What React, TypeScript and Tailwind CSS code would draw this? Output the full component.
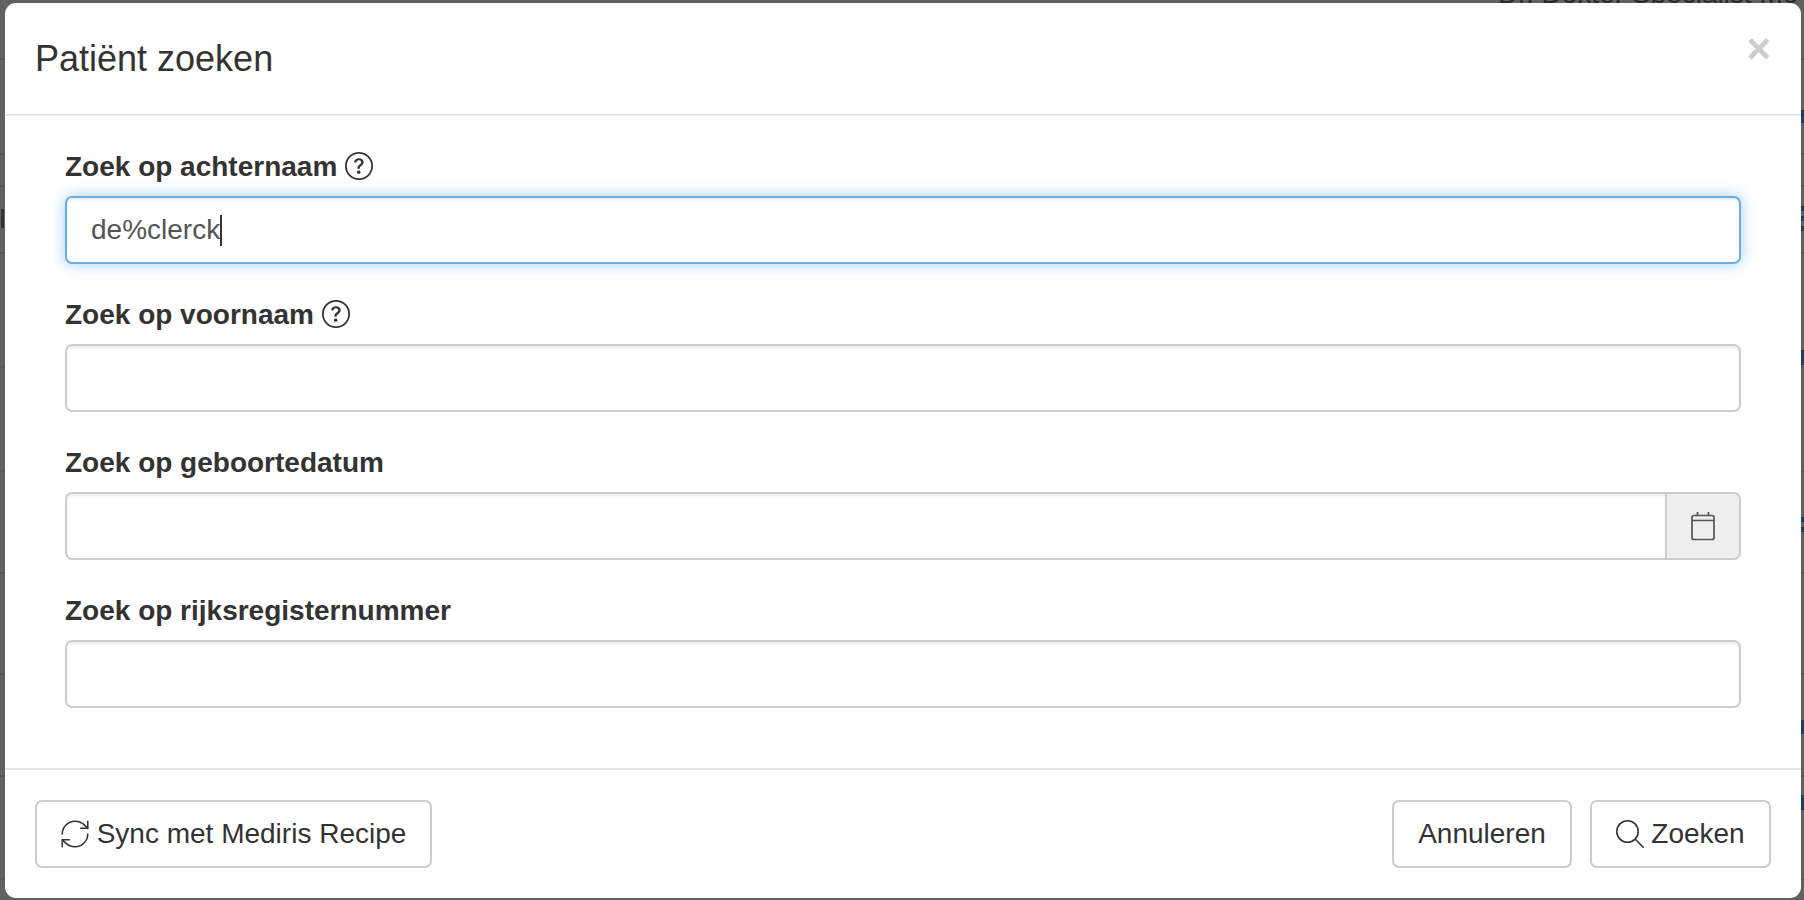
import React from 'react';
import { RefreshCw } from 'lucide-react';
import { BsQuestionCircle } from 'react-icons/bs';

const inputClass =
  'block h-[68px] w-full rounded-[7px] border-2 border-[#ccc] bg-white px-[22px] text-[28px] text-[#555] shadow-[inset_0_2px_2px_rgba(0,0,0,0.075)] outline-none';
const labelClass = 'mb-[11px] flex h-[37px] items-center gap-[8px] text-[28px] leading-[37px] font-bold text-[#333]';
const buttonClass =
  'flex h-[68px] items-center justify-center rounded-[7px] border-2 border-[#ccc] bg-white text-[28px] text-[#333]';

// rows and text of the page behind the dimmed backdrop
const rowLines = [58, 153, 185, 252, 366, 470, 572, 673, 775, 878];
const blueBits = [
  { top: 110, height: 13 },
  { top: 206, height: 5 },
  { top: 216, height: 5 },
  { top: 226, height: 5 },
  { top: 350, height: 15 },
  { top: 517, height: 5 },
  { top: 527, height: 5 },
  { top: 720, height: 14 },
  { top: 795, height: 15 },
];

const Backdrop = () => (
  <div className="absolute inset-0 overflow-hidden bg-[#616161]">
    {rowLines.map((y) => (
      <div key={y} className="absolute left-0 h-[2px] w-full bg-[#565656]" style={{ top: y }} />
    ))}
    {blueBits.map((b) => (
      <div key={b.top} className="absolute right-0 w-[3px] bg-[#1c3f5f]" style={{ top: b.top, height: b.height }} />
    ))}
    <div className="absolute top-[209px] left-[1px] h-[19px] w-[3px] bg-[#333]" />
    <div className="absolute top-[-23px] left-[1498px] text-[28px] leading-[34px] whitespace-nowrap text-[#2a2a2a]">
      Dr. Dokter Specialist Mo
    </div>
  </div>
);

const CalendarIcon = () => (
  <svg width="26" height="30" viewBox="0 0 26 30" fill="none" stroke="#555" strokeWidth="1.7">
    <rect x="2" y="4.5" width="22" height="24" rx="2" />
    <path d="M2 9.5h22M7.5 1v3.5M18.5 1v3.5" />
  </svg>
);

const SearchIcon = () => (
  <svg width="28" height="28" viewBox="0 0 28 28" fill="none" stroke="#333" strokeWidth="1.6" strokeLinecap="round">
    <circle cx="11.5" cy="11.5" r="10.7" />
    <path d="M19.5 19.5l7.7 7.7" />
  </svg>
);

const HelpIcon = () => <BsQuestionCircle size={28} className="mt-[-2px]" />;

export default function App() {
  return (
    <div className="relative h-[900px] w-[1804px] overflow-hidden pt-[3px] pr-[3px] pb-[2px] pl-[5px] font-['Liberation_Sans',Arial,sans-serif]">
      <Backdrop />
      <div className="relative flex h-full flex-col rounded-[11px] bg-white">
        <div className="flex h-[113px] items-start justify-between border-b-2 border-[#e5e5e5] pr-[30px] pl-[30px]">
          <h4 className="mt-[33px] text-[36px] leading-[46px] text-[#333]">Patiënt zoeken</h4>
          <button className="mt-[26px] text-[42px] leading-[39px] font-bold text-[#ccc]">×</button>
        </div>

        <div className="flex-1 pt-[32px] pr-[60px] pl-[60px]">
          <div className="mb-[32px]">
            <label className={labelClass}>
              Zoek op achternaam <HelpIcon />
            </label>
            <div className="relative">
              <input
                readOnly
                value="de%clerck"
                className="block h-[68px] w-full rounded-[7px] border-2 border-[#66afe9] bg-white px-[24px] text-[28px] text-[#555] shadow-[inset_0_2px_2px_rgba(0,0,0,0.075),0_0_15px_rgba(102,175,233,0.6)] outline-none"
              />
              <span className="absolute top-[19px] left-[155px] h-[31px] w-[1.5px] bg-[#333]" />
            </div>
          </div>

          <div className="mb-[32px]">
            <label className={labelClass}>
              Zoek op voornaam <HelpIcon />
            </label>
            <input readOnly className={inputClass} />
          </div>

          <div className="mb-[32px]">
            <label className={labelClass}>Zoek op geboortedatum</label>
            <div className="flex h-[68px]">
              <input
                readOnly
                className="block h-full flex-1 rounded-l-[7px] border-2 border-[#ccc] bg-white px-[22px] text-[28px] text-[#555] shadow-[inset_0_2px_2px_rgba(0,0,0,0.075)] outline-none"
              />
              <span className="flex h-full w-[74px] items-center justify-center rounded-r-[7px] border-2 border-l-0 border-[#ccc] bg-[#eee]">
                <CalendarIcon />
              </span>
            </div>
          </div>

          <div>
            <label className={labelClass}>Zoek op rijksregisternummer</label>
            <input readOnly className={inputClass} />
          </div>
        </div>

        <div className="flex items-center justify-between border-t-2 border-[#e5e5e5] p-[30px]">
          <button className={`${buttonClass} w-[397px] gap-[5px] pr-[3px]`}>
            <RefreshCw size={34} strokeWidth={1.1} color="#333" />
            Sync met Mediris Recipe
          </button>
          <div className="flex gap-[18px]">
            <button className={`${buttonClass} w-[180px]`}>Annuleren</button>
            <button className={`${buttonClass} w-[181px] gap-[7px]`}>
              <SearchIcon />
              Zoeken
            </button>
          </div>
        </div>
      </div>
    </div>
  );
}
